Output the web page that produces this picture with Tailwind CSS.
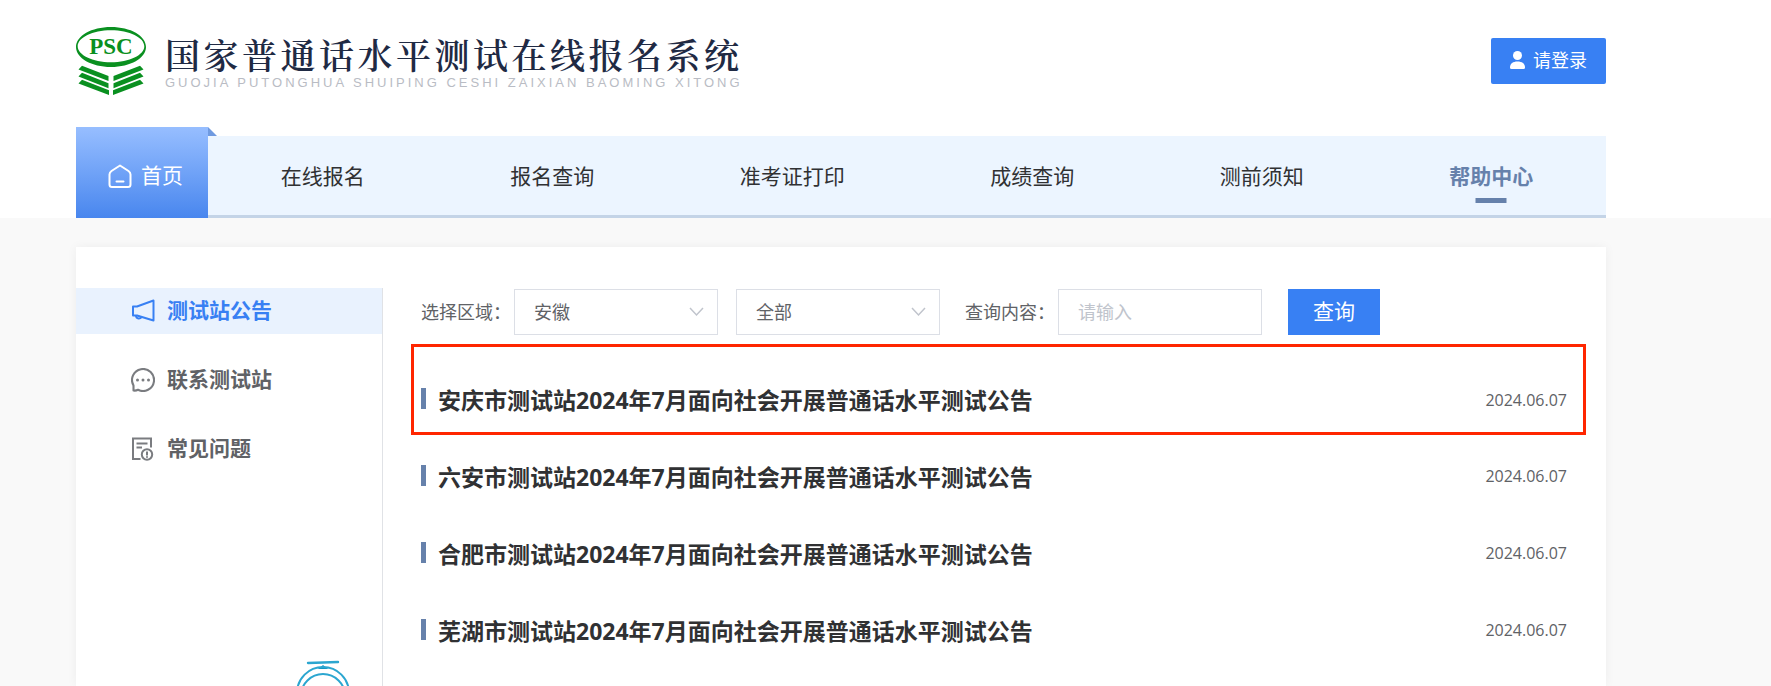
<!DOCTYPE html>
<html lang="zh-CN">
<head>
    <meta charset="UTF-8">
    <meta name="viewport" content="width=device-width, initial-scale=1.0">
    <title>国家普通话水平测试在线报名系统</title>
    <script src="https://cdn.jsdelivr.net/npm/@tailwindcss/browser@4"></script>
</head>
<body class="flex min-h-screen flex-col bg-[#f9f9f9] font-['Open_Sans','Noto_Sans_CJK_SC',sans-serif] text-[#606266]">

    <!-- Header -->
    <header class="bg-white pl-[76px] pr-[165px]">
        <div class="flex h-[127px] items-start justify-between">
            <a href="#" class="flex items-start pt-[27px]">
                <svg class="h-[68px] w-[70px]" viewBox="0 0 70 68" fill="#0a9020" aria-hidden="true">
                    <path fill-rule="evenodd" d="M35 0C54.500 0 70 8.800 70 20S54.500 40 35 40 0 31.200 0 20 15.500 0 35 0ZM35 3.200C16.500 3.200 1.700 10.500 1.700 19.300S16.500 35.300 35 35.300 68.300 28.100 68.300 19.300 53.500 3.200 35 3.200Z"/>
                    <text x="35" y="27" text-anchor="middle" font-family="Liberation Serif, serif" font-weight="bold" font-size="23">PSC</text>
                    <path d="M6 38.800 32.500 49V54L2.500 42.600ZM6 45.800 32.500 56.300V61.300L2.500 49.600ZM6 52.800 33 63.300V68L2.500 56.600Z"/>
                    <path d="M64 38.800 37.500 49V54L67.500 42.600ZM64 45.800 37.500 56.300V61.300L67.500 49.600ZM64 52.800 37 63.300V68L67.500 56.600Z"/>
                </svg>
                <span class="flex flex-col pl-[19px] pt-[6px]">
                    <span class="font-['Noto_Serif_CJK_SC','Noto_Sans_CJK_SC',serif] text-[35px] leading-[42px] font-semibold tracking-widest text-[#1f2a44]">国家普通话水平测试在线报名系统</span>
                    <span class="font-['Liberation_Sans',sans-serif] text-[13px] leading-[16px] tracking-[3px] text-[#b9bcc4]">GUOJIA PUTONGHUA SHUIPING CESHI ZAIXIAN BAOMING XITONG</span>
                </span>
            </a>
            <button type="button" class="mt-[38px] flex h-[46px] w-[115px] items-center justify-center gap-2 rounded-xs bg-[#3880f3] pb-[2px] text-[18px] text-white">
                <svg class="h-[18px] w-[15px]" viewBox="0 0 15 18" fill="currentColor" aria-hidden="true">
                    <circle cx="7.500" cy="4.500" r="4.500"/>
                    <path d="M0 16.500C0 12.500 3 10.500 7.500 10.500S15 12.500 15 16.500Q15 18 13.500 18H1.500Q0 18 0 16.500Z"/>
                </svg>
                请登录
            </button>
        </div>

        <!-- Navigation -->
        <nav class="flex items-end text-[21px] text-[#303133]">
            <a href="#" class="relative flex h-[91px] w-[132px] items-center gap-[9px] bg-linear-to-b from-[#97beff] to-[#4886ee] pl-8 pt-[6px] text-white">
                <svg class="h-[24px] w-[24px]" viewBox="0 0 24 24" fill="none" stroke="currentColor" stroke-width="2" stroke-linejoin="round" stroke-linecap="round" aria-hidden="true">
                    <path d="M12 1.500 20.500 7Q22.500 8.500 22.500 10.500V20.500Q22.500 23 20 23H4Q1.500 23 1.500 20.500V10.500Q1.500 8.500 3.500 7Z"/>
                    <path d="M8.500 17.500H15.500"/>
                </svg>
                首页
                <svg class="absolute left-full top-0 size-[9px]" viewBox="0 0 9 9" fill="#6f9ae0" aria-hidden="true"><path d="M0 0 9 9H0Z"/></svg>
            </a>
            <div class="flex h-[82px] flex-1 items-center justify-around border-b-[3px] border-[#c4d4e7] bg-[#ecf5ff] pt-[2px]">
                <a href="#">在线报名</a>
                <a href="#">报名查询</a>
                <a href="#">准考证打印</a>
                <a href="#">成绩查询</a>
                <a href="#">测前须知</a>
                <a href="#" class="relative font-bold text-[#6681ab]">
                    帮助中心
                    <span class="absolute left-1/2 top-full mt-[6px] h-[5px] w-[31px] -translate-x-1/2 bg-[#6681ab]"></span>
                </a>
            </div>
        </nav>
    </header>

    <!-- Content card -->
    <div class="flex flex-1 flex-col pl-[76px] pr-[165px] pt-[29px]">
        <div class="relative flex flex-1 bg-white pt-[41px] shadow-[0_0_10px_rgba(0,0,0,0.05)]">
            <aside class="flex w-[307px] flex-col gap-[23px] border-r border-[#e0e2e6] text-[21px] font-bold">
                <a href="#" class="flex h-[46px] items-center gap-3 bg-[#e9f2fe] pl-[55px] text-[#3880f3]">
                    <svg class="size-[24px]" viewBox="0 0 24 24" fill="none" stroke="currentColor" stroke-width="2" stroke-linejoin="round" aria-hidden="true">
                        <path d="M2 7.500H6L22.500 1.500V21.500L6 16.500H2Z"/>
                        <path d="M5 16.500C5 20.300 10 20.300 10.300 17.800"/>
                    </svg>
                    测试站公告
                </a>
                <a href="#" class="flex h-[46px] items-center gap-3 pl-[55px]">
                    <svg class="size-[24px]" viewBox="0 0 24 24" fill="none" stroke="#7a7c80" stroke-width="2.100" stroke-linejoin="round" aria-hidden="true">
                        <path d="M2.500 22.500V17.500A11 11 0 1 1 7 21.800C5.500 22.600 4 22.700 2.500 22.500Z"/>
                        <g fill="#7a7c80" stroke="none"><circle cx="6.500" cy="12" r="1.500"/><circle cx="12" cy="12" r="1.500"/><circle cx="17.500" cy="12" r="1.500"/></g>
                    </svg>
                    联系测试站
                </a>
                <a href="#" class="flex h-[46px] items-center gap-3 pl-[55px]">
                    <svg class="size-[24px]" viewBox="0 0 24 24" fill="none" stroke="#7a7c80" stroke-width="2" aria-hidden="true">
                        <path d="M9.500 22H2V1.500H20V10.500M5.500 6.500H16.500M5.500 10.500H11"/>
                        <circle cx="16" cy="17.500" r="5.200"/>
                        <path d="M16 14.500V18.500M16 19.300V20.800"/>
                    </svg>
                    常见问题
                </a>
            </aside>

            <main class="min-w-0 flex-1 pl-[28px] pr-5">
                <form class="flex h-[56px] items-start pl-[10px] pt-px text-[18px]">
                    <label for="province" class="w-[93px] leading-[46px]">选择区域：</label>
                    <div class="relative mr-[18px]">
                        <select id="province" class="h-[46px] w-[204px] appearance-none border border-[#dcdfe6] bg-white pl-[19px]">
                            <option>安徽</option>
                        </select>
                        <svg class="pointer-events-none absolute right-[14px] top-[18px] h-[10px] w-[15px]" viewBox="0 0 15 10" fill="none" stroke="#c0c4cc" stroke-width="1.500" aria-hidden="true"><path d="M1 1 7.500 8 14 1"/></svg>
                    </div>
                    <div class="relative mr-[25px]">
                        <select id="city" aria-label="城市" class="h-[46px] w-[204px] appearance-none border border-[#dcdfe6] bg-white pl-[19px]">
                            <option>全部</option>
                        </select>
                        <svg class="pointer-events-none absolute right-[14px] top-[18px] h-[10px] w-[15px]" viewBox="0 0 15 10" fill="none" stroke="#c0c4cc" stroke-width="1.500" aria-hidden="true"><path d="M1 1 7.500 8 14 1"/></svg>
                    </div>
                    <label for="keyword" class="w-[93px] leading-[46px]">查询内容：</label>
                    <input id="keyword" type="text" placeholder="请输入" class="mr-[26px] h-[46px] w-[204px] border border-[#dcdfe6] px-[19px] placeholder:text-[#c0c4cc]">
                    <button type="button" class="h-[46px] w-[92px] bg-[#3880f3] text-[21px] text-white">查询</button>
                </form>

                <!-- Announcements -->
                <ul class="text-[23px] font-bold text-[#303133]">
                    <li class="flex h-[91px] items-center border-3 border-[#ff2600] pl-[7px] pr-4 pt-[18px]">
                        <span class="mr-3 h-[21px] w-[5px] bg-[#6681ab]"></span>
                        <a href="#" class="flex-1 pt-1">安庆市测试站2024年7月面向社会开展普通话水平测试公告</a>
                        <time class="pt-[2px] text-[16px] font-normal text-[#606266]">2024.06.07</time>
                    </li>
                    <li class="flex h-[77px] items-center pl-[10px] pr-[19px] pt-[3px]">
                        <span class="mr-3 h-[21px] w-[5px] bg-[#6681ab]"></span>
                        <a href="#" class="flex-1 pt-1">六安市测试站2024年7月面向社会开展普通话水平测试公告</a>
                        <time class="pt-[2px] text-[16px] font-normal text-[#606266]">2024.06.07</time>
                    </li>
                    <li class="flex h-[77px] items-center pl-[10px] pr-[19px] pt-[3px]">
                        <span class="mr-3 h-[21px] w-[5px] bg-[#6681ab]"></span>
                        <a href="#" class="flex-1 pt-1">合肥市测试站2024年7月面向社会开展普通话水平测试公告</a>
                        <time class="pt-[2px] text-[16px] font-normal text-[#606266]">2024.06.07</time>
                    </li>
                    <li class="flex h-[77px] items-center pl-[10px] pr-[19px] pt-[3px]">
                        <span class="mr-3 h-[21px] w-[5px] bg-[#6681ab]"></span>
                        <a href="#" class="flex-1 pt-1">芜湖市测试站2024年7月面向社会开展普通话水平测试公告</a>
                        <time class="pt-[2px] text-[16px] font-normal text-[#606266]">2024.06.07</time>
                    </li>
                </ul>
            </main>

            <!-- Floating helper, rising from the bottom edge -->
            <svg class="absolute bottom-0 left-[217px] h-[26px] w-[60px]" viewBox="0 0 60 26" fill="none" stroke="#2ba6d0" aria-hidden="true">
                <path d="M15 3 45 2" stroke-width="2.400" stroke-linecap="round"/>
                <path d="M24 9Q27 8 30 5 33 8 36 9Z" fill="#1097c4" stroke="none"/>
                <circle cx="30" cy="33" r="26" stroke-width="2"/>
                <circle cx="30" cy="36" r="22" stroke-width="2"/>
            </svg>
        </div>
    </div>

</body>
</html>
